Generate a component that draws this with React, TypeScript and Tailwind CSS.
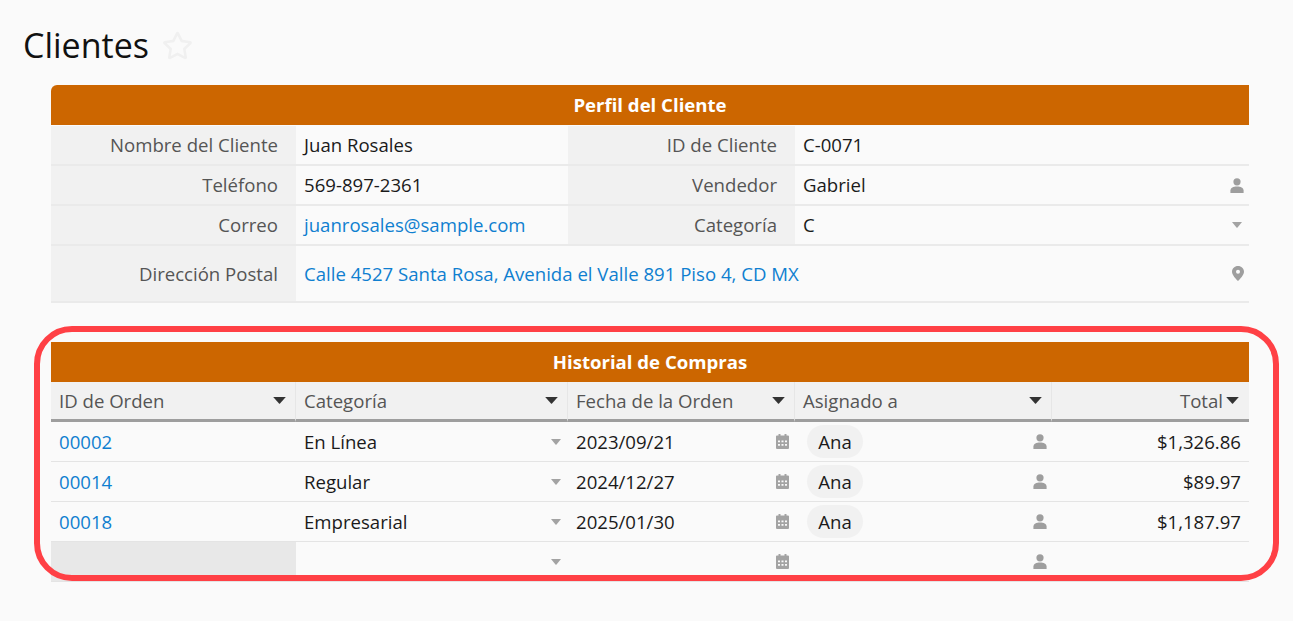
import { FaRegStar } from 'react-icons/fa';

// Anchos de columna compartidos por las dos tablas
const cols = ['w-[245px]', 'w-[272px]', 'w-[227px]', 'w-[257px]', 'w-[197px]'];

const UserIcon = () => (
  <svg width="14" height="15" viewBox="0 0 14 15" className="fill-[#9e9e9e] shrink-0">
    <circle cx="7" cy="3.8" r="3.6" />
    <path d="M0.4 15 V12.6 C0.4 9.6 3.4 8.4 7 8.4 C10.6 8.4 13.6 9.6 13.6 12.6 V15 Z" />
  </svg>
);

const CaretIcon = () => (
  <svg width="10" height="6" viewBox="0 0 10 6" className="fill-[#a3a3a3] shrink-0 mr-[2px]">
    <path d="M0 0 H10 L5.5 5.6 Q5 6 4.5 5.6 Z" />
  </svg>
);

const HeadCaret = () => (
  <svg width="13" height="7" viewBox="0 0 13 7" className="fill-[#333333] shrink-0">
    <path d="M0.2 0 H12.8 L7 6.6 Q6.5 7 6 6.6 Z" />
  </svg>
);

const CalendarIcon = () => (
  <svg width="13" height="15" viewBox="0 0 13 15" className="fill-[#a3a3a3] shrink-0 mr-[1px]">
    <rect x="2.5" y="0" width="2" height="3" />
    <rect x="8.5" y="0" width="2" height="3" />
    <path fillRule="evenodd" d="M1 1.5 H12 Q13 1.5 13 2.5 V14 Q13 15 12 15 H1 Q0 15 0 14 V2.5 Q0 1.5 1 1.5 Z M2 6.5 V8.3 H4 V6.5 Z M5.5 6.5 V8.3 H7.5 V6.5 Z M9 6.5 V8.3 H11 V6.5 Z M2 10 V11.8 H4 V10 Z M5.5 10 V11.8 H7.5 V10 Z M9 10 V11.8 H11 V10 Z" />
  </svg>
);

const PinIcon = () => (
  <svg width="12" height="15" viewBox="0 0 12 15" className="fill-[#9e9e9e] shrink-0">
    <path fillRule="evenodd" d="M6 0 C9.4 0 12 2.5 12 5.7 C12 9 8 13 6 15 C4 13 0 9 0 5.7 C0 2.5 2.6 0 6 0 Z M6 3.8 A2 2 0 1 0 6 7.8 A2 2 0 1 0 6 3.8 Z" />
  </svg>
);

const Label = ({ children, width, h = 'h-10' }: { children: string; width: string; h?: string }) => (
  <div className={`${width} ${h} bg-[#f1f1f1] border-b-2 border-[#eaeaea] flex items-center justify-end pr-[18px] text-[#555555] shrink-0`}>
    {children}
  </div>
);

const Value = ({ children, width, icon, link, h = 'h-10' }: { children: string; width: string; icon?: React.ReactNode; link?: boolean; h?: string }) => (
  <div className={`${width} ${h} border-b-2 border-[#eaeaea] flex items-center justify-between pl-[8px] pr-[5px] shrink-0 ${link ? 'text-[#0f7fd0]' : 'text-[#1a1a1a]'}`}>
    <span>{children}</span>
    {icon}
  </div>
);

const profile = [
  { a: 'Nombre del Cliente', b: 'Juan Rosales', c: 'ID de Cliente', d: 'C-0071' },
  { a: 'Teléfono', b: '569-897-2361', c: 'Vendedor', d: 'Gabriel', icon: <UserIcon /> },
  { a: 'Correo', b: 'juanrosales@sample.com', c: 'Categoría', d: 'C', link: true, icon: <CaretIcon /> },
];

const headers = ['ID de Orden', 'Categoría', 'Fecha de la Orden', 'Asignado a'];

const orders = [
  { id: '00002', cat: 'En Línea', date: '2023/09/21', who: 'Ana', total: '$1,326.86' },
  { id: '00014', cat: 'Regular', date: '2024/12/27', who: 'Ana', total: '$89.97' },
  { id: '00018', cat: 'Empresarial', date: '2025/01/30', who: 'Ana', total: '$1,187.97' },
  { id: '', cat: '', date: '', who: '', total: '' },
];

export default function App() {
  return (
    <div className="relative w-[1305px] h-[636px] bg-white overflow-hidden font-['Open_Sans',sans-serif] text-[18.6px]">
      <div className="relative w-[1293px] h-[621px] bg-[#fafafa] pt-[22px]">
        {/* Título */}
        <div className="flex items-center gap-[13px] pl-[23px] h-[46px]">
          <h1 className="text-[34px] text-[#111111] font-normal leading-none">Clientes</h1>
          <FaRegStar className="text-[#f0f0f0] text-[31px]" />
        </div>

        {/* Perfil del Cliente */}
        <div className="ml-[51px] w-[1198px] mt-[17px]">
          <div className="h-[41px] bg-[#cc6600] border-b border-[#fafafa] rounded-tl-[6px] flex items-center justify-center text-white font-bold">
            Perfil del Cliente
          </div>
          {profile.map((r) => (
            <div key={r.a} className="flex">
              <Label width="w-[245px]">{r.a}</Label>
              <Value width="w-[272px]" link={r.link}>{r.b}</Value>
              <Label width="w-[227px]">{r.c}</Label>
              <Value width="w-[454px]" icon={r.icon}>{r.d}</Value>
            </div>
          ))}
          <div className="flex">
            <Label width="w-[245px]" h="h-[57px]">Dirección Postal</Label>
            <Value width="w-[953px]" h="h-[57px]" link icon={<PinIcon />}>
              Calle 4527 Santa Rosa, Avenida el Valle 891 Piso 4, CD MX
            </Value>
          </div>
        </div>

        {/* Historial de Compras */}
        <div className="ml-[51px] w-[1198px] mt-[39px]">
          <div className="h-10 bg-[#cc6600] flex items-center justify-center text-white font-bold">
            Historial de Compras
          </div>
          <div className="flex">
            {headers.map((h, i) => (
              <div key={h} className={`${cols[i]} h-10 bg-[#f1f1f1] border-r border-[#e6e6e6] border-b-[3px] border-b-[#9e9e9e] flex items-center justify-between pl-[8px] pr-[9px] text-[#555555]`}>
                <span>{h}</span>
                <HeadCaret />
              </div>
            ))}
            <div className={`${cols[4]} h-10 bg-[#f1f1f1] border-b-[3px] border-b-[#9e9e9e] flex items-center justify-end gap-[3px] pr-[10px] text-[#555555]`}>
              <span>Total</span>
              <HeadCaret />
            </div>
          </div>
          {orders.map((o, i) => (
            <div key={i} className="flex h-10 border-b border-[#e4e4e4] text-[#1a1a1a]">
              <div className={`${cols[0]} flex items-center pl-[8px] text-[#0f7fd0] ${o.id ? '' : 'bg-[#e8e8e8]'}`}>{o.id}</div>
              <div className={`${cols[1]} flex items-center justify-between pl-[8px] pr-[5px]`}>
                <span>{o.cat}</span>
                <CaretIcon />
              </div>
              <div className={`${cols[2]} flex items-center justify-between pl-[8px] pr-[5px]`}>
                <span>{o.date}</span>
                <CalendarIcon />
              </div>
              <div className={`${cols[3]} flex items-center justify-between pl-[12px] pr-[5px]`}>
                {o.who ? <span className="bg-[#f1f1f1] rounded-full w-[56px] h-[33px] flex items-center justify-center">{o.who}</span> : <span />}
                <UserIcon />
              </div>
              <div className={`${cols[4]} flex items-center justify-end pr-[8px]`}>{o.total}</div>
            </div>
          ))}
        </div>

        {/* Resaltado rojo sobre la segunda tabla */}
        <div className="absolute left-[34px] top-[326px] w-[1245px] h-[255px] border-[6px] border-[#ff4045] rounded-[38px]" />
      </div>
    </div>
  );
}
